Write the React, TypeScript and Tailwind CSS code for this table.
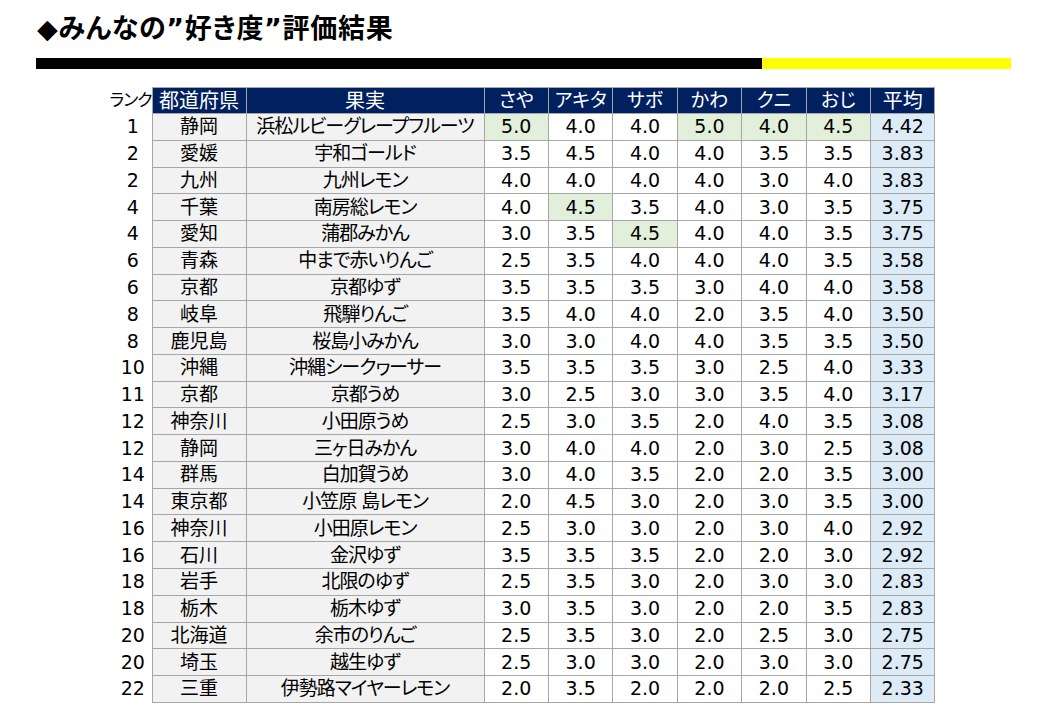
import React from "react";

type Row = [string, string, string, number[], string, number[]];

const rows: Row[] = [
  ["1", "静岡", "浜松ルビーグレープフルーツ", [5.0, 4.0, 4.0, 5.0, 4.0, 4.5], "4.42", [0, 3, 4, 5]],
  ["2", "愛媛", "宇和ゴールド", [3.5, 4.5, 4.0, 4.0, 3.5, 3.5], "3.83", []],
  ["2", "九州", "九州レモン", [4.0, 4.0, 4.0, 4.0, 3.0, 4.0], "3.83", []],
  ["4", "千葉", "南房総レモン", [4.0, 4.5, 3.5, 4.0, 3.0, 3.5], "3.75", [1]],
  ["4", "愛知", "蒲郡みかん", [3.0, 3.5, 4.5, 4.0, 4.0, 3.5], "3.75", [2]],
  ["6", "青森", "中まで赤いりんご", [2.5, 3.5, 4.0, 4.0, 4.0, 3.5], "3.58", []],
  ["6", "京都", "京都ゆず", [3.5, 3.5, 3.5, 3.0, 4.0, 4.0], "3.58", []],
  ["8", "岐阜", "飛騨りんご", [3.5, 4.0, 4.0, 2.0, 3.5, 4.0], "3.50", []],
  ["8", "鹿児島", "桜島小みかん", [3.0, 3.0, 4.0, 4.0, 3.5, 3.5], "3.50", []],
  ["10", "沖縄", "沖縄シークヮーサー", [3.5, 3.5, 3.5, 3.0, 2.5, 4.0], "3.33", []],
  ["11", "京都", "京都うめ", [3.0, 2.5, 3.0, 3.0, 3.5, 4.0], "3.17", []],
  ["12", "神奈川", "小田原うめ", [2.5, 3.0, 3.5, 2.0, 4.0, 3.5], "3.08", []],
  ["12", "静岡", "三ヶ日みかん", [3.0, 4.0, 4.0, 2.0, 3.0, 2.5], "3.08", []],
  ["14", "群馬", "白加賀うめ", [3.0, 4.0, 3.5, 2.0, 2.0, 3.5], "3.00", []],
  ["14", "東京都", "小笠原 島レモン", [2.0, 4.5, 3.0, 2.0, 3.0, 3.5], "3.00", []],
  ["16", "神奈川", "小田原レモン", [2.5, 3.0, 3.0, 2.0, 3.0, 4.0], "2.92", []],
  ["16", "石川", "金沢ゆず", [3.5, 3.5, 3.5, 2.0, 2.0, 3.0], "2.92", []],
  ["18", "岩手", "北限のゆず", [2.5, 3.5, 3.0, 2.0, 3.0, 3.0], "2.83", []],
  ["18", "栃木", "栃木ゆず", [3.0, 3.5, 3.0, 2.0, 2.0, 3.5], "2.83", []],
  ["20", "北海道", "余市のりんご", [2.5, 3.5, 3.0, 2.0, 2.5, 3.0], "2.75", []],
  ["20", "埼玉", "越生ゆず", [2.5, 3.0, 3.0, 2.0, 3.0, 3.0], "2.75", []],
  ["22", "三重", "伊勢路マイヤーレモン", [2.0, 3.5, 2.0, 2.0, 2.0, 2.5], "2.33", []],
];

const heads = ["さや", "アキタ", "サボ", "かわ", "クニ", "おじ"];

export default function App() {
  return (
    <div
      className="w-[1040px] h-[720px] bg-white text-black overflow-hidden [font-feature-settings:'palt']"
      style={{ fontFamily: '"DejaVu Sans", "Noto Sans CJK JP", sans-serif' }}
    >
      <div className="pl-[37px] pt-[11px] h-[48px] text-[27px] font-bold leading-[36px] tracking-[0.7px]">
        ◆みんなの”好き度”評価結果
      </div>
      <div className="ml-[36px] mt-[10px] flex h-[11px]">
        <div className="w-[726px] bg-black" />
        <div className="w-[249px] bg-[#ffff00]" />
      </div>
      <table className="ml-[114px] mt-[18px] table-fixed border-collapse text-[19px] leading-none">
        <colgroup>
          <col className="w-[38px]" />
          <col className="w-[94px]" />
          <col className="w-[238px]" />
          {Array.from({ length: 7 }).map((_, i) => (
            <col key={i} className="w-[64.43px]" />
          ))}
        </colgroup>
        <thead>
          <tr className="h-[26px]">
            <th className="p-0 font-normal text-[17px] whitespace-nowrap">
              <div className="flex justify-end -ml-[10px] tracking-[-1px]">ランク</div>
            </th>
            <th className="p-0 font-normal text-[20px] bg-[#002060] text-white border border-[#a6a6a6] text-center">都道府県</th>
            <th className="p-0 font-normal text-[20px] bg-[#002060] text-white border border-[#a6a6a6] text-center">果実</th>
            {heads.map((h) => (
              <th key={h} className="p-0 font-normal bg-[#002060] text-white border border-[#a6a6a6] text-center">
                {h}
              </th>
            ))}
            <th className="p-0 font-normal text-[20px] bg-[#002060] text-white border border-[#a6a6a6] text-center">平均</th>
          </tr>
        </thead>
        <tbody>
          {rows.map((r, ri) => (
            <tr key={ri} className="h-[26.77px]">
              <td className="p-0 text-center">{r[0]}</td>
              <td className="p-0 text-center bg-[#f2f2f2] border border-[#a6a6a6] whitespace-nowrap">{r[1]}</td>
              <td className="p-0 text-center bg-[#f2f2f2] border border-[#a6a6a6] whitespace-nowrap tracking-[-1px]">{r[2]}</td>
              {r[3].map((v, ci) => (
                <td
                  key={ci}
                  className={
                    "p-0 text-center border border-[#a6a6a6] " +
                    (r[5].includes(ci) ? "bg-[#e2efda]" : "bg-white")
                  }
                >
                  {v.toFixed(1)}
                </td>
              ))}
              <td className="p-0 text-center bg-[#ddebf7] border border-[#a6a6a6]">{r[4]}</td>
            </tr>
          ))}
        </tbody>
      </table>
    </div>
  );
}
